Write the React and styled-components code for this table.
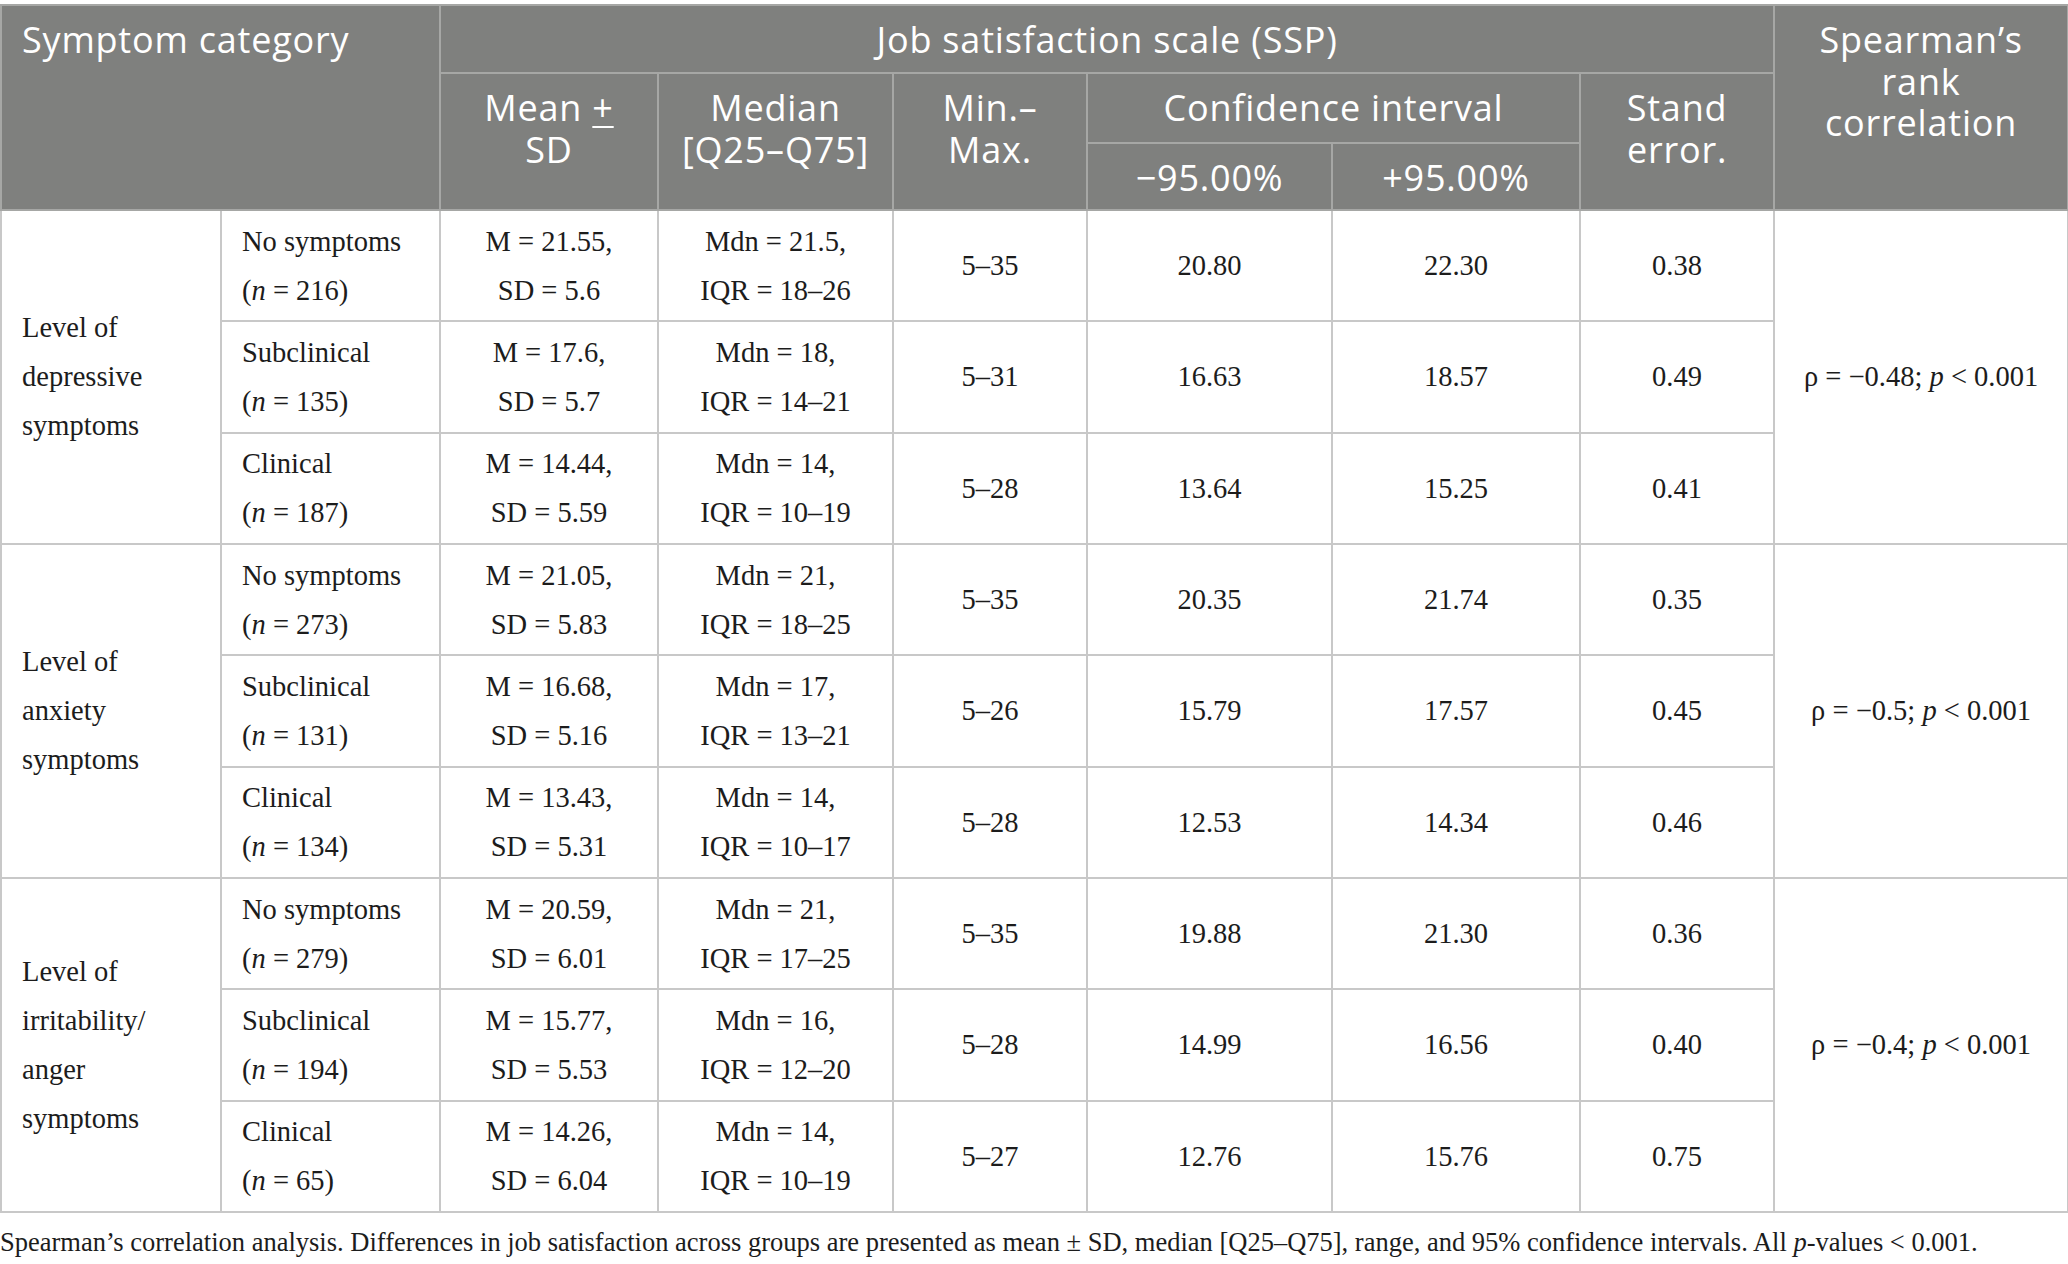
import styled, {createGlobalStyle} from "styled-components";

const GlobalStyle = createGlobalStyle`
    html, body {
        margin: 0;
        padding: 0;
        background: #ffffff;
    }
`;

const COLS = [220, 219, 218, 235, 194, 245, 248, 194, 294];

const groups = [
    {
        label: ["Level of", "depressive", "symptoms"],
        rho: "−0.48",
        rows: [
            ["No symptoms", "216", "M = 21.55,", "SD = 5.6", "Mdn = 21.5,", "IQR = 18–26", "5–35", "20.80", "22.30", "0.38"],
            ["Subclinical", "135", "M = 17.6,", "SD = 5.7", "Mdn = 18,", "IQR = 14–21", "5–31", "16.63", "18.57", "0.49"],
            ["Clinical", "187", "M = 14.44,", "SD = 5.59", "Mdn = 14,", "IQR = 10–19", "5–28", "13.64", "15.25", "0.41"],
        ],
    },
    {
        label: ["Level of", "anxiety", "symptoms"],
        rho: "−0.5",
        rows: [
            ["No symptoms", "273", "M = 21.05,", "SD = 5.83", "Mdn = 21,", "IQR = 18–25", "5–35", "20.35", "21.74", "0.35"],
            ["Subclinical", "131", "M = 16.68,", "SD = 5.16", "Mdn = 17,", "IQR = 13–21", "5–26", "15.79", "17.57", "0.45"],
            ["Clinical", "134", "M = 13.43,", "SD = 5.31", "Mdn = 14,", "IQR = 10–17", "5–28", "12.53", "14.34", "0.46"],
        ],
    },
    {
        label: ["Level of", "irritability/", "anger", "symptoms"],
        rho: "−0.4",
        rows: [
            ["No symptoms", "279", "M = 20.59,", "SD = 6.01", "Mdn = 21,", "IQR = 17–25", "5–35", "19.88", "21.30", "0.36"],
            ["Subclinical", "194", "M = 15.77,", "SD = 5.53", "Mdn = 16,", "IQR = 12–20", "5–28", "14.99", "16.56", "0.40"],
            ["Clinical", "65", "M = 14.26,", "SD = 6.04", "Mdn = 14,", "IQR = 10–19", "5–27", "12.76", "15.76", "0.75"],
        ],
    },
];

export default function App() {
    return (
        <Page>
            <GlobalStyle/>
            <Table>
                <colgroup>
                    {COLS.map((w, i) => <col key={i} style={{width: w}}/>)}
                </colgroup>
                <thead>
                    <HeadRow $h={68}>
                        <Th colSpan={2} rowSpan={3} $left>Symptom category</Th>
                        <Th colSpan={6}>Job satisfaction scale (SSP)</Th>
                        <Th rowSpan={3}>Spearman’s<br/>rank<br/>correlation</Th>
                    </HeadRow>
                    <HeadRow $h={70}>
                        <Th rowSpan={2}>Mean <u>+</u><br/>SD</Th>
                        <Th rowSpan={2}>Median<br/>[Q25–Q75]</Th>
                        <Th rowSpan={2}>Min.–<br/>Max.</Th>
                        <Th colSpan={2}>Confidence interval</Th>
                        <Th rowSpan={2}>Stand<br/>error.</Th>
                    </HeadRow>
                    <HeadRow $h={67}>
                        <Th>−95.00%</Th>
                        <Th>+95.00%</Th>
                    </HeadRow>
                </thead>
                <tbody>
                    {groups.map((g, gi) =>
                        g.rows.map((r, ri) => (
                            <BodyRow key={gi + "-" + ri}>
                                {ri === 0 && (
                                    <Td rowSpan={3} $left>
                                        {g.label.map((l) => <Line key={l}>{l}</Line>)}
                                    </Td>
                                )}
                                <Td $left>
                                    <Line>{r[0]}</Line>
                                    <Line>(<i>n</i> = {r[1]})</Line>
                                </Td>
                                <Td>
                                    <Line>{r[2]}</Line>
                                    <Line>{r[3]}</Line>
                                </Td>
                                <Td>
                                    <Line>{r[4]}</Line>
                                    <Line>{r[5]}</Line>
                                </Td>
                                <Td>{r[6]}</Td>
                                <Td>{r[7]}</Td>
                                <Td>{r[8]}</Td>
                                <Td>{r[9]}</Td>
                                {ri === 0 && (
                                    <Td rowSpan={3}>
                                        ρ = {g.rho}; <i>p</i> &lt; 0.001
                                    </Td>
                                )}
                            </BodyRow>
                        ))
                    )}
                </tbody>
            </Table>
            <Caption>
                Spearman’s correlation analysis. Differences in job satisfaction across groups are presented as mean ± SD,
                median [Q25–Q75], range, and 95% confidence intervals. All <i>p</i>-values &lt; 0.001.
            </Caption>
        </Page>
    );
}

const Page = styled.div`
    width: 2068px;
    padding-top: 4px;
    box-sizing: border-box;
`;

const Table = styled.table`
    width: 2068px;
    table-layout: fixed;
    border-collapse: collapse;
`;

const HeadRow = styled.tr`
    height: ${(p) => p.$h}px;
`;

const Th = styled.th`
    background: #7f807e;
    color: #ffffff;
    border: 2px solid #a6a7a5;
    font-family: "Open Sans", "Noto Sans", sans-serif;
    font-weight: 400;
    font-size: 36px;
    letter-spacing: 0.8px;
    line-height: 41.5px;
    text-align: ${(p) => (p.$left ? "left" : "center")};
    vertical-align: top;
    padding: 13px 8px 0 ${(p) => (p.$left ? "20px" : "8px")};

    u {
        text-decoration-thickness: 2px;
        text-underline-offset: 5px;
    }
`;

const BodyRow = styled.tr`
    height: 111.33px;
`;

const Td = styled.td`
    border: 2px solid #c8c8c8;
    color: #1c1c1c;
    font-family: "Liberation Serif", "Times New Roman", serif;
    font-size: 28.5px;
    line-height: 49px;
    text-align: ${(p) => (p.$left ? "left" : "center")};
    vertical-align: middle;
    padding: 0 8px 0 ${(p) => (p.$left ? "20px" : "8px")};
`;

const Line = styled.span`
    display: block;
    white-space: nowrap;
`;

const Caption = styled.p`
    margin: 14px 0 0;
    font-family: "Liberation Serif", "Times New Roman", serif;
    font-size: 26.5px;
    line-height: 31px;
    color: #1c1c1c;
    white-space: nowrap;
`;
